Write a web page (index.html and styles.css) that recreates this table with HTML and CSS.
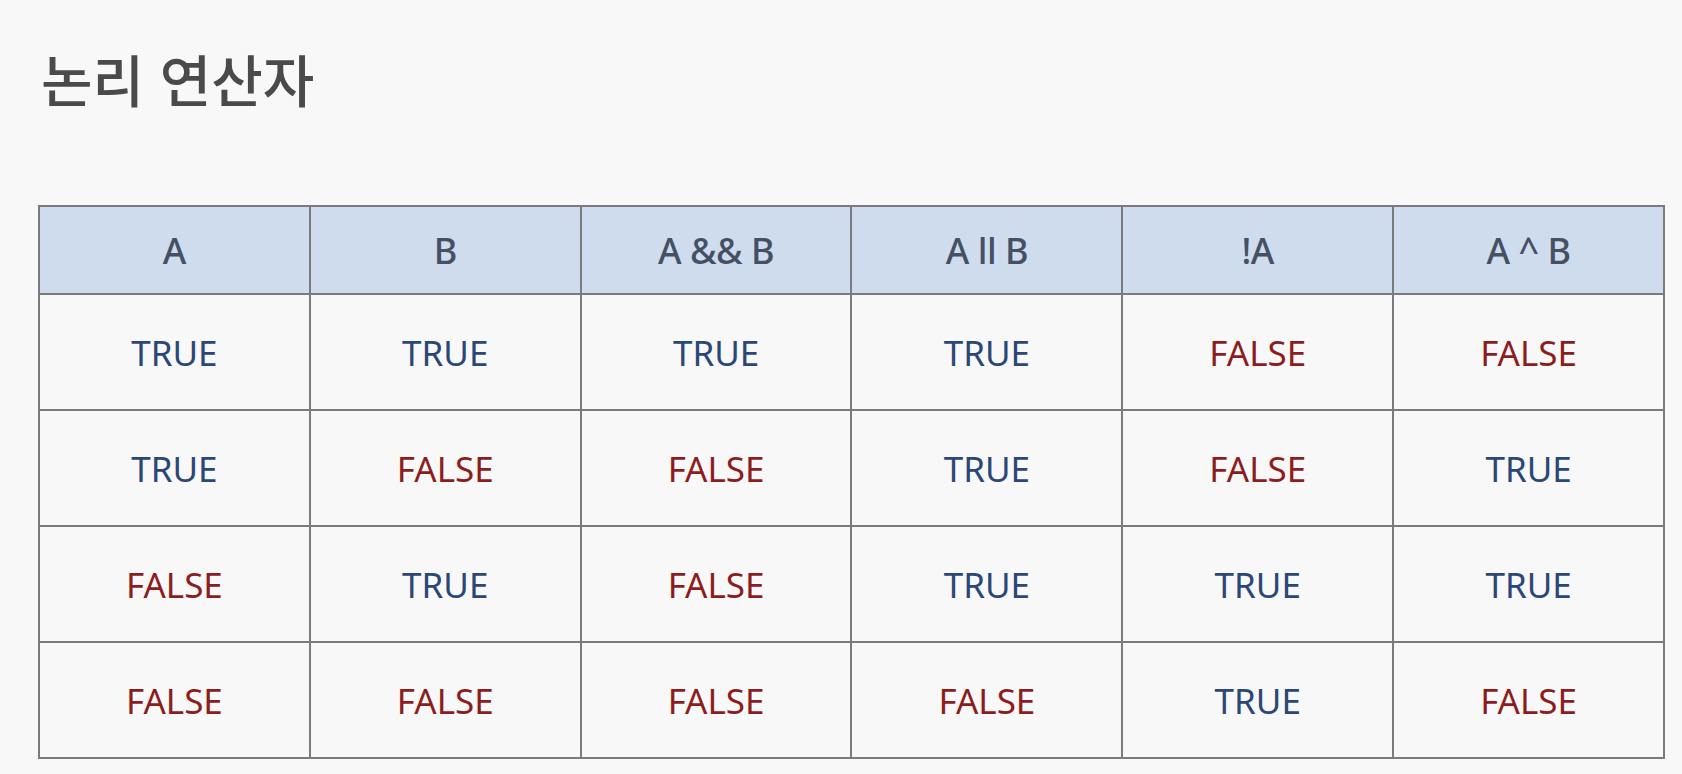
FILE: index.html
```html
<!DOCTYPE html>
<html lang="ko">
<head>
<meta charset="utf-8">
<title>논리 연산자</title>
<link rel="stylesheet" href="styles.css">
</head>
<body>
<main class="slide">
  <h1 class="title">논리 연산자</h1>
  <table class="truth">
    <thead>
      <tr><th>A</th><th>B</th><th>A &amp;&amp; B</th><th>A ll B</th><th>!A</th><th>A ^ B</th></tr>
    </thead>
    <tbody>
      <tr><td class="t">TRUE</td><td class="t">TRUE</td><td class="t">TRUE</td><td class="t">TRUE</td><td class="f">FALSE</td><td class="f">FALSE</td></tr>
      <tr><td class="t">TRUE</td><td class="f">FALSE</td><td class="f">FALSE</td><td class="t">TRUE</td><td class="f">FALSE</td><td class="t">TRUE</td></tr>
      <tr><td class="f">FALSE</td><td class="t">TRUE</td><td class="f">FALSE</td><td class="t">TRUE</td><td class="t">TRUE</td><td class="t">TRUE</td></tr>
      <tr><td class="f">FALSE</td><td class="f">FALSE</td><td class="f">FALSE</td><td class="f">FALSE</td><td class="t">TRUE</td><td class="f">FALSE</td></tr>
    </tbody>
  </table>
</main>
</body>
</html>
```
FILE: styles.css
```css
html, body {
  margin: 0;
  padding: 0;
  background: #f8f8f9;
}
.slide {
  width: 1682px;
  height: 774px;
  padding: 0 0 0 38px;
  box-sizing: border-box;
  overflow: hidden;
}
.title {
  margin: 0;
  padding: 38px 0 0 3px;
  height: 205px;
  box-sizing: border-box;
  font-family: "Noto Sans CJK KR", sans-serif;
  font-weight: 500;
  font-size: 56px;
  line-height: 80px;
  color: #4a4a4a;
}
.truth {
  width: 1627px;
  table-layout: fixed;
  border-collapse: collapse;
  font-family: "Noto Sans", "Noto Sans CJK KR", sans-serif;
  text-align: center;
}
.truth th, .truth td {
  border: 2px solid #7b7b7b;
  padding: 0;
}
.truth th {
  height: 86px;
  background: #cfdcee;
  color: #465064;
  font-weight: 500;
  font-size: 36px;
  letter-spacing: -0.5px;
}
.truth td {
  height: 114px;
  background: #f8f8f9;
  font-size: 35px;
}
.truth td.t { color: #2b4776; }
.truth td.f { color: #8d1d1d; }
```
